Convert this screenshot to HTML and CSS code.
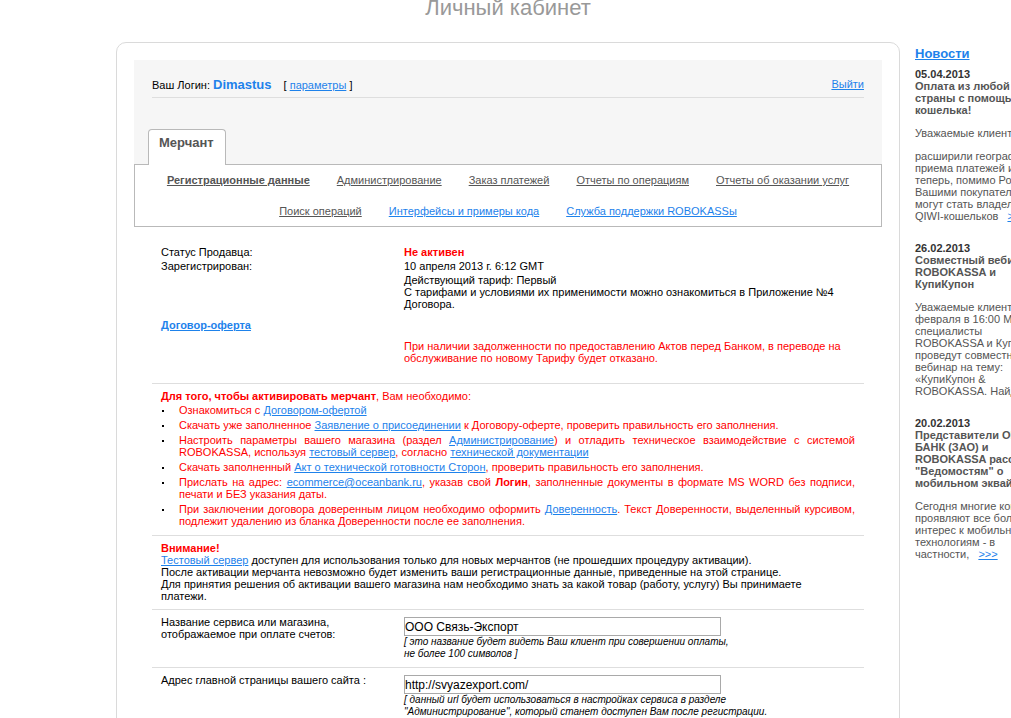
FILE: index.html
```html
<!DOCTYPE html>
<html lang="ru">
<head>
<meta charset="utf-8">
<title>Личный кабинет</title>
<link rel="stylesheet" href="styles.css">
</head>
<body>
<div class="page">
  <main class="main">
    <h1 class="title">Личный кабинет</h1>
    <div class="card">
      <header class="head">
        <div class="login">
          <p>Ваш Логин: <strong class="user">Dimastus</strong><span class="params">[ <a href="#">параметры</a> ]</span></p>
          <a href="#">Выйти</a>
        </div>
        <div class="tab">Мерчант</div>
      </header>
      <nav class="nav">
        <a class="active" href="#">Регистрационные данные</a>
        <a href="#">Администрирование</a>
        <a href="#">Заказ платежей</a>
        <a href="#">Отчеты по операциям</a>
        <a href="#">Отчеты об оказании услуг</a>
        <a href="#">Поиск операций</a>
        <a class="blue" href="#">Интерфейсы и примеры кода</a>
        <a class="blue" href="#">Служба поддержки ROBOKASSы</a>
      </nav>
      <div class="content">
        <section class="block info">
          <div class="row"><span>Статус Продавца:</span><strong class="red">Не активен</strong></div>
          <div class="row"><span>Зарегистрирован:</span><span>10 апреля 2013 г. 6:12 GMT</span></div>
          <div class="row"><span></span><p>Действующий тариф: Первый<br>С тарифами и условиями их применимости можно ознакомиться в Приложение №4<br>Договора.</p></div>
          <a class="offer" href="#">Договор-оферта</a>
          <div class="row"><span></span><p class="red">При наличии задолженности по предоставлению Актов перед Банком, в переводе на<br>обслуживание по новому Тарифу будет отказано.</p></div>
        </section>
        <section class="block steps red">
          <p><strong>Для того, чтобы активировать мерчант</strong>, Вам необходимо:</p>
          <ul class="list">
            <li><p>Ознакомиться с <a href="#">Договором-офертой</a></p></li>
            <li><p>Скачать уже заполненное <a href="#">Заявление о присоединении</a> к Договору-оферте, проверить правильность его заполнения.</p></li>
            <li><p><span class="full">Настроить параметры вашего магазина (раздел <a href="#">Администрирование</a>) и отладить техническое взаимодействие с системой</span> ROBOKASSA, используя <a href="#">тестовый сервер</a>, согласно <a href="#">технической документации</a></p></li>
            <li><p>Скачать заполненный <a href="#">Акт о технической готовности Сторон</a>, проверить правильность его заполнения.</p></li>
            <li><p><span class="full">Прислать на адрес: <a href="#">ecommerce@oceanbank.ru</a>, указав свой <strong>Логин</strong>, заполненные документы в формате MS WORD без подписи,</span> печати и БЕЗ указания даты.</p></li>
            <li><p><span class="full">При заключении договора доверенным лицом необходимо оформить <a href="#">Доверенность</a>. Текст Доверенности, выделенный курсивом,</span> подлежит удалению из бланка Доверенности после ее заполнения.</p></li>
          </ul>
        </section>
        <section class="block">
          <strong class="red">Внимание!</strong>
          <p><a href="#">Тестовый сервер</a> доступен для использования только для новых мерчантов (не прошедших процедуру активации).<br>После активации мерчанта невозможно будет изменить ваши регистрационные данные, приведенные на этой странице.<br>Для принятия решения об активации вашего магазина нам необходимо знать за какой товар (работу, услугу) Вы принимаете<br>платежи.</p>
        </section>
        <section class="block row">
          <label for="shop">Название сервиса или магазина,<br>отображаемое при оплате счетов:</label>
          <div><input id="shop" type="text" value="ООО Связь-Экспорт"><p class="hint">[ это название будет видеть Ваш клиент при совершении оплаты,<br>не более 100 символов ]</p></div>
        </section>
        <section class="block row">
          <label for="site">Адрес главной страницы вашего сайта :</label>
          <div><input id="site" type="text" value="http://svyazexport.com/"><p class="hint">[ данный url будет использоваться в настройках сервиса в разделе<br>"Администрирование", который станет доступен Вам после регистрации.</p></div>
        </section>
      </div>
    </div>
  </main>
  <aside class="news">
    <h2><a href="#">Новости</a></h2>
    <article>
      <time>05.04.2013</time>
      <h3>Оплата из любой<br>страны с помощью<br>кошелька!</h3>
      <p>Уважаемые клиенты</p>
      <p>расширили географию<br>приема платежей и<br>теперь, помимо России<br>Вашими покупателями<br>могут стать владельцы<br>QIWI-кошельков <a class="more" href="#">&gt;&gt;&gt;</a></p>
    </article>
    <article>
      <time>26.02.2013</time>
      <h3>Совместный вебинар<br>ROBOKASSA и<br>КупиКупон</h3>
      <p>Уважаемые клиенты<br>февраля в 16:00 МСК<br>специалисты<br>ROBOKASSA и КупиКупон<br>проведут совместный<br>вебинар на тему:<br>«КупиКупон &amp;<br>ROBOKASSA. Найди</p>
    </article>
    <article>
      <time>20.02.2013</time>
      <h3>Представители ОКЕАН<br>БАНК (ЗАО) и<br>ROBOKASSA рассказали<br>"Ведомостям" о<br>мобильном эквайринге</h3>
      <p>Сегодня многие компании<br>проявляют все больший<br>интерес к мобильным<br>технологиям - в<br>частности, <a class="more" href="#">&gt;&gt;&gt;</a></p>
    </article>
  </aside>
</div>
</body>
</html>
```
FILE: styles.css
```css
* { box-sizing: border-box; }
body {
  margin: 0;
  height: 100vh;
  overflow: hidden;
  background: #fff;
  color: #000;
  font: 11px/12px "Liberation Sans", Arial, sans-serif;
}
p, h1, h2, h3, ul { margin: 0; padding: 0; }
a { color: #1e82eb; }
.red { color: #f00; }

.page {
  display: grid;
  grid-template-columns: minmax(0, 1fr) 96px;
  column-gap: 15px;
  padding-left: 116px;
}

.title {
  height: 42px;
  color: #999;
  font-size: 22px;
  font-weight: normal;
  line-height: 16px;
  text-align: center;
}
.card {
  padding: 17px;
  border: 1px solid #dadada;
  border-radius: 10px;
}
.head {
  display: flex;
  flex-direction: column;
  justify-content: space-between;
  align-items: flex-start;
  height: 104px;
  padding: 16px 18px 0 14px;
  background: #f6f6f6;
}
.login {
  display: flex;
  justify-content: space-between;
  align-self: stretch;
  margin-left: 4px;
  padding-bottom: 3px;
  border-bottom: 1px solid #dedede;
  line-height: 17px;
}
.user { color: #1e82eb; font-size: 13px; }
.params { margin-left: 12px; }
.tab {
  height: 36px;
  margin-bottom: -1px;
  padding: 5px 11px 0 10px;
  border: 1px solid #b9b9b9;
  border-bottom: 0;
  border-radius: 4px 4px 0 0;
  background: #fff;
  color: #555;
  font-size: 13px;
  font-weight: bold;
  line-height: 16px;
  z-index: 1;
}
.nav {
  display: flex;
  flex-wrap: wrap;
  justify-content: center;
  gap: 19px 27px;
  padding: 9px 8px;
  border: 1px solid #b9b9b9;
}
.nav a { color: #555; }
.nav .active { font-weight: bold; }
.nav .blue { color: #1e82eb; }

.content { padding: 13px 18px 0; }
.block { padding: 6px 9px 7px; border-bottom: 1px solid #dedede; }
.row { display: grid; grid-template-columns: 243px minmax(0, 1fr); }
.info { display: grid; row-gap: 2px; padding-bottom: 19px; }
.offer { justify-self: start; margin: 7px 0; font-weight: bold; }
.list { display: grid; row-gap: 3px; padding: 2px 0 1px; list-style: none; }
.list li { display: flex; }
.list li::before {
  content: "";
  flex: none;
  width: 2px;
  height: 2px;
  margin: 6px 15px 0 1px;
  background: #000;
}
.list p { flex: 1; }
.full { display: block; text-align-last: justify; }
input {
  display: block;
  width: 317px;
  height: 19px;
  margin-top: 1px;
  padding: 0;
  border: 1px solid #a9a9a9;
  border-radius: 0;
  background: #fff;
  color: #000;
  font: 12px "Liberation Sans", Arial, sans-serif;
}
.hint { font-size: 10px; font-style: italic; }

.news { padding-top: 46px; color: #555; white-space: nowrap; }
.news h2 { margin-bottom: 6px; font-size: 13px; line-height: 16px; }
.news h3 { font-size: 11px; line-height: 12px; }
.news time { color: #333; font-weight: bold; }
.news article { margin-bottom: 20px; }
.news article p { margin-top: 11px; }
.more { margin-left: 6px; }
```
